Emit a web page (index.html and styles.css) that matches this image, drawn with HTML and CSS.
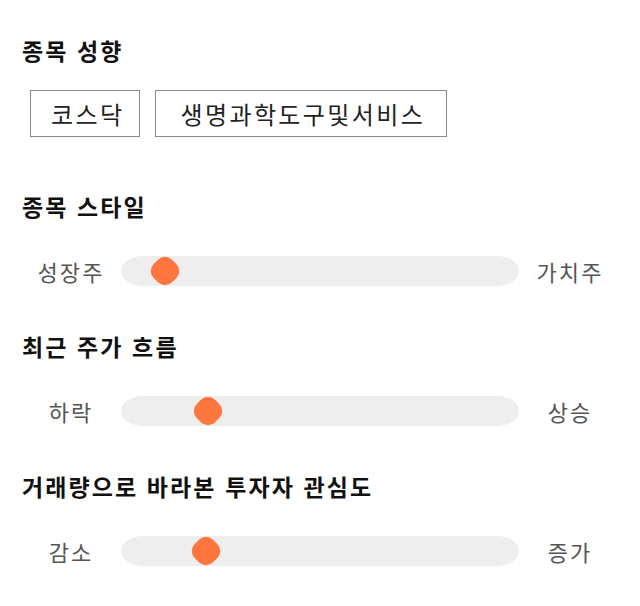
FILE: index.html
```html
<!DOCTYPE html>
<html lang="ko">
<head>
<meta charset="utf-8">
<link rel="stylesheet" href="styles.css">
</head>
<body>
<div class="page">
  <section class="section">
    <h2 class="title">종목 성향</h2>
    <div class="tags">
      <span class="tag">코스닥</span>
      <span class="tag tag-wide">생명과학도구및서비스</span>
    </div>
  </section>

  <section class="section">
    <h2 class="title">종목 스타일</h2>
    <div class="slider-row">
      <span class="label">성장주</span>
      <div class="track">
        <span class="thumb" style="left:30.5px"></span>
      </div>
      <span class="label">가치주</span>
    </div>
  </section>

  <section class="section">
    <h2 class="title">최근 주가 흐름</h2>
    <div class="slider-row">
      <span class="label">하락</span>
      <div class="track">
        <span class="thumb" style="left:74px"></span>
      </div>
      <span class="label">상승</span>
    </div>
  </section>

  <section class="section">
    <h2 class="title">거래량으로 바라본 투자자 관심도</h2>
    <div class="slider-row">
      <span class="label">감소</span>
      <div class="track">
        <span class="thumb" style="left:72px"></span>
      </div>
      <span class="label">증가</span>
    </div>
  </section>
</div>
</body>
</html>
```

FILE: styles.css
```css
html, body {
  margin: 0;
  padding: 0;
  background: #ffffff;
}

body {
  font-family: "Noto Sans CJK KR", "Noto Sans", sans-serif;
  color: #111;
}

.page {
  padding: 35px 20px 0 22px;
}

.section {
  margin: 0 0 45px 0;
}

.section:first-child {
  margin-bottom: 54px;
}

.title {
  margin: 0;
  font-size: 23px;
  font-weight: 700;
  letter-spacing: 2.1px;
  line-height: 30px;
  height: 30px;
  color: #111;
}

.tags {
  display: flex;
  gap: 15px;
  margin-top: 25px;
  padding-left: 8px;
}

.tag {
  display: flex;
  align-items: center;
  justify-content: center;
  height: 45px;
  padding: 0 15px 0 20px;
  border: 1px solid #8a8a8a;
  font-size: 24px;
  letter-spacing: 2.4px;
  color: #222;
  line-height: 1;
}

.tag-wide {
  padding: 0 21px 0 24px;
}

.slider-row {
  display: grid;
  grid-template-columns: 100px 399px 100px;
  align-items: center;
  margin-top: 35px;
  margin-left: -2px;
  height: 30px;
}

.label {
  text-align: center;
  font-size: 22px;
  letter-spacing: 2.2px;
  text-indent: 2.2px;
  color: #555;
  line-height: 30px;
}

.track {
  position: relative;
  height: 30px;
  background: #eeeeee;
  border-radius: 22px / 15px;
  margin-left: 1px;
}

.thumb {
  position: absolute;
  top: 2px;
  width: 26px;
  height: 26px;
  border-radius: 10px;
  background: #ff763e;
  transform: rotate(45deg);
}
```
